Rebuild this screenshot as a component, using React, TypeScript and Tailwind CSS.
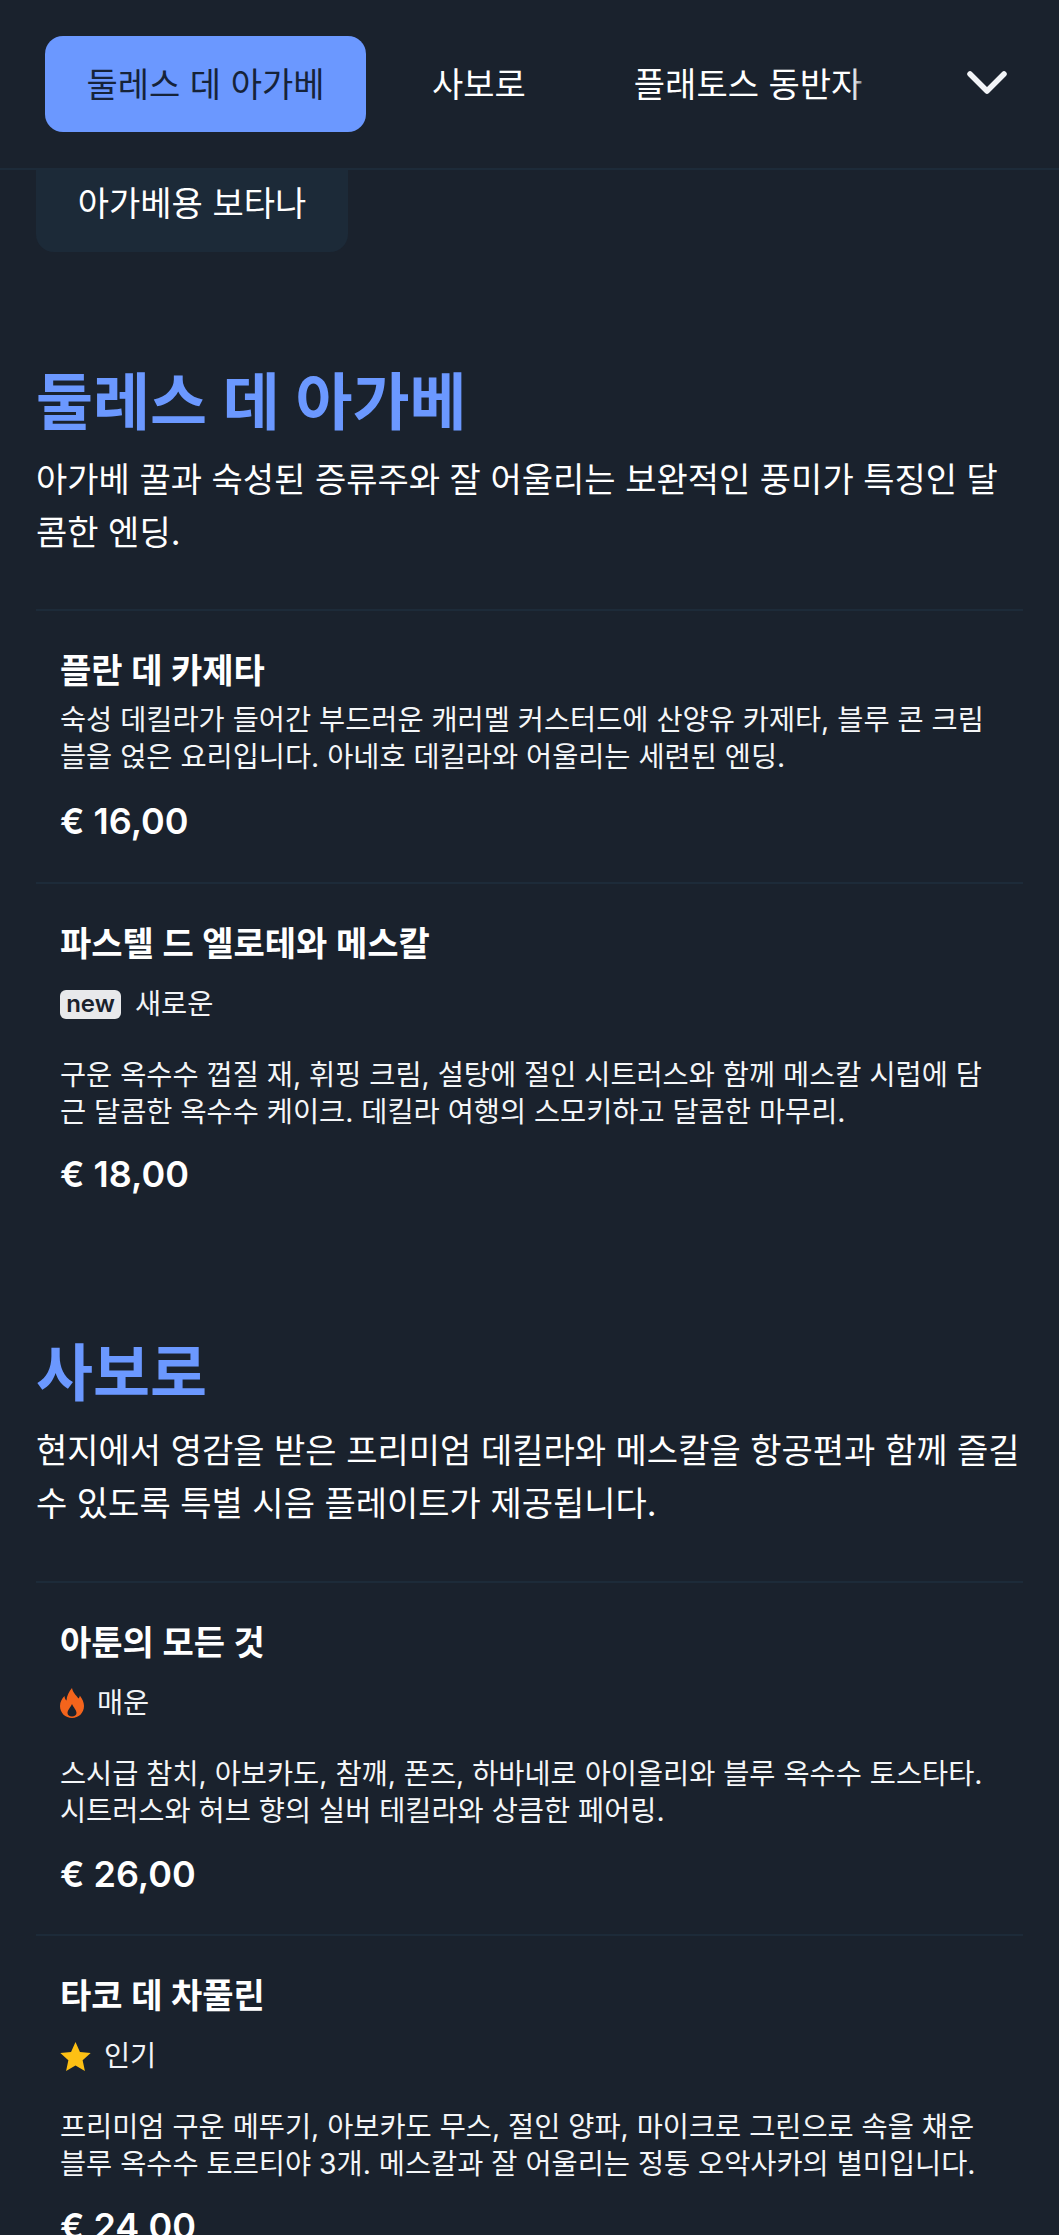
import { type ReactNode } from "react";

const font = "font-['Inter','Noto_Sans_CJK_KR',sans-serif]";

function Flame() {
  return (
    <svg viewBox="0 0 24 30" className="h-[30px] w-[24px]">
      <path
        fill="#f4641c"
        fillRule="evenodd"
        d="M12 0C13 5 16 7 18.500 10.500C19.500 9.500 19.700 8.500 19.800 7.500C22.500 11 24 14.500 24 18C24 25 18.500 30 12 30C5.500 30 0 25 0 18C0 14 2 10.500 4.500 8C4.700 10 5.300 11.500 6.500 12.500C6.500 8 9 3.500 12 0ZM12 16C10.500 19.500 7.500 22 7.500 25C7.500 27.200 9.500 28.500 12 28.500C14.500 28.500 16.500 27.200 16.500 25C16.500 22 13.500 19.500 12 16Z"
      />
    </svg>
  );
}

function Star() {
  return (
    <svg viewBox="0 0 30 30" className="h-[31px] w-[31px]">
      <path fill="#fdc014" d="M15 1l4.300 9.600 10.400 1.100-7.800 7 2.200 10.300L15 23.700 5.900 29l2.200-10.300-7.800-7 10.400-1.100z" />
    </svg>
  );
}

function Tag({ icon, label, gap }: { icon: ReactNode; label: string; gap: string }) {
  return (
    <div className={`mt-[18px] flex h-[40px] items-center ${gap} text-[28.4px] text-[#f2f4f7]`}>
      {icon}
      <span>{label}</span>
    </div>
  );
}

type Item = {
  title: string;
  tag?: ReactNode;
  desc: string[];
  price: string;
  descTop: string;
  priceTop: string;
  bottom?: string;
};

function MenuItem({ title, tag, desc, price, descTop, priceTop, bottom = "pb-[34px]" }: Item) {
  return (
    <div className={`border-t-2 border-[#1d2b39] ${bottom} pl-[24px] pr-[24px] pt-[38px]`}>
      <h3 className="text-[34px] leading-[44px] font-semibold text-white">{title}</h3>
      {tag}
      <div className={`${descTop} text-[28.4px] leading-[37px] text-[#f4f6f8]`}>
        {desc.map((line) => (
          <p key={line} className="whitespace-nowrap">{line}</p>
        ))}
      </div>
      <p className={`${priceTop} h-[52px] text-[36px] leading-[52px] font-semibold text-white`}>{price}</p>
    </div>
  );
}

export default function App() {
  return (
    <div className={`h-[2235px] w-[1059px] overflow-hidden bg-[#1a222d] ${font}`}>
      <header className="flex h-[170px] items-center border-b-2 border-[#1d2b39] pl-[45px]">
        <div className="flex h-[96px] w-[321px] items-center justify-center rounded-[18px] bg-[#6b98ff] text-[34px] text-[#162339]">
          둘레스 데 아가베
        </div>
        <span className="ml-[66px] text-[34px] text-white">사보로</span>
        <span className="relative ml-[108px] text-[34px] text-white">
          플래토스 동반자
          <span className="absolute right-0 top-0 h-full w-[10px] bg-gradient-to-r from-transparent to-[#1a222d]/50" />
        </span>
        <svg viewBox="0 0 44 28" className="ml-[103px] h-[28px] w-[44px]">
          <path d="M5 4l17 17L39 4" fill="none" stroke="#f2f4f7" strokeWidth="5.500" strokeLinecap="round" strokeLinejoin="round" />
        </svg>
      </header>
      <main className="px-[36px]">
        <div className="flex h-[82px] w-[312px] items-center justify-center rounded-b-[18px] bg-[#1c2a38] pb-[16px] text-[34px] text-white">
          아가베용 보타나
        </div>
        <h2 className="mt-[111px] text-[62px] leading-[80px] font-semibold text-[#6b98ff]">둘레스 데 아가베</h2>
        <p className="mb-[50px] mt-[10px] text-[34px] leading-[53px] text-white">
          아가베 꿀과 숙성된 증류주와 잘 어울리는 보완적인 풍미가 특징인 달콤한 엔딩.
        </p>
        <MenuItem
          title="플란 데 카제타"
          descTop="mt-[8px]"
          priceTop="mt-[20px]"
          bottom="pb-[35px]"
          desc={[
            "숙성 데킬라가 들어간 부드러운 캐러멜 커스터드에 산양유 카제타, 블루 콘 크림",
            "블을 얹은 요리입니다. 아네호 데킬라와 어울리는 세련된 엔딩.",
          ]}
          price="€ 16,00"
        />
        <MenuItem
          title="파스텔 드 엘로테와 메스칼"
          descTop="mt-[32px]"
          priceTop="mt-[18px]"
          tag={
            <Tag
              gap="gap-[14px]"
              label="새로운"
              icon={
                <span className="flex h-[29px] w-[61px] items-center justify-center rounded-[6px] bg-[#e8e9eb] text-[24px] leading-none font-semibold text-[#1a222d]">
                  new
                </span>
              }
            />
          }
          desc={[
            "구운 옥수수 껍질 재, 휘핑 크림, 설탕에 절인 시트러스와 함께 메스칼 시럽에 담",
            "근 달콤한 옥수수 케이크. 데킬라 여행의 스모키하고 달콤한 마무리.",
          ]}
          price="€ 18,00"
        />
        <h2 className="mt-[100px] text-[62px] leading-[80px] font-semibold text-[#6b98ff]">사보로</h2>
        <p className="mb-[51px] mt-[10px] text-[34px] leading-[53px] text-white">
          현지에서 영감을 받은 프리미엄 데킬라와 메스칼을 항공편과 함께 즐길 수 있도록 특별 시음 플레이트가 제공됩니다.
        </p>
        <MenuItem
          title="아툰의 모든 것"
          descTop="mt-[32px]"
          priceTop="mt-[19px]"
          tag={<Tag gap="gap-[13px]" label="매운" icon={<Flame />} />}
          desc={[
            "스시급 참치, 아보카도, 참깨, 폰즈, 하바네로 아이올리와 블루 옥수수 토스타타.",
            "시트러스와 허브 향의 실버 테킬라와 상큼한 페어링.",
          ]}
          price="€ 26,00"
        />
        <MenuItem
          title="타코 데 차풀린"
          descTop="mt-[32px]"
          priceTop="mt-[18px]"
          tag={<Tag gap="gap-[13px]" label="인기" icon={<Star />} />}
          desc={[
            "프리미엄 구운 메뚜기, 아보카도 무스, 절인 양파, 마이크로 그린으로 속을 채운",
            "블루 옥수수 토르티야 3개. 메스칼과 잘 어울리는 정통 오악사카의 별미입니다.",
          ]}
          price="€ 24,00"
        />
      </main>
    </div>
  );
}
